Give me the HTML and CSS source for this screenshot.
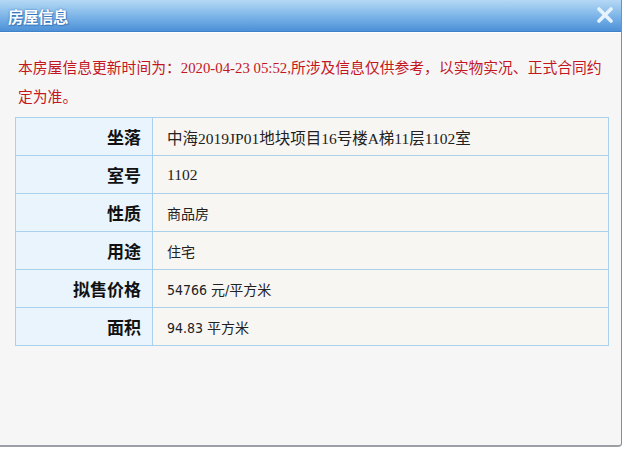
FILE: index.html
```html
<!DOCTYPE html>
<html lang="zh-CN">
<head>
<meta charset="utf-8">
<title>房屋信息</title>
<link rel="stylesheet" href="styles.css">
</head>
<body>
<div class="dialog">
  <div class="titlebar">
    <span class="title">房屋信息</span>
    <span class="close">
      <svg width="18" height="16" viewBox="0 0 18 16"><path d="M3 2 L15 14 M15 2 L3 14" stroke="#e6f2fc" stroke-width="3.6" stroke-linecap="round"/></svg>
    </span>
  </div>
  <div class="content">
    <p class="notice">本房屋信息更新时间为：2020-04-23 05:52,所涉及信息仅供参考，以实物实况、正式合同约定为准。</p>
    <table class="info">
      <tr><th>坐落</th><td class="serif">中海2019JP01地块项目16号楼A梯11层1102室</td></tr>
      <tr><th>室号</th><td class="serif">1102</td></tr>
      <tr><th>性质</th><td>商品房</td></tr>
      <tr><th>用途</th><td>住宅</td></tr>
      <tr><th>拟售价格</th><td>54766 元/平方米</td></tr>
      <tr><th>面积</th><td>94.83 平方米</td></tr>
    </table>
  </div>
</div>
</body>
</html>
```
FILE: styles.css
```css
html, body {
  margin: 0;
  padding: 0;
  background: #ffffff;
}
body {
  width: 625px;
  height: 450px;
  overflow: hidden;
  font-family: "Noto Sans CJK SC", sans-serif;
}
.dialog {
  width: 622px;
  height: 447px;
  border-right: 1px solid #8c8c8c;
  border-bottom: 2px solid #9aa0a6;
  border-bottom-right-radius: 4px;
  background: #f6f6f6;
  display: flex;
  flex-direction: column;
  box-sizing: border-box;
}
.titlebar {
  height: 32px;
  flex: none;
  box-sizing: border-box;
  border-bottom: 1px solid #3f82c9;
  background: linear-gradient(to bottom, #b5d8f5 0%, #8fc1ec 35%, #6aa7e2 70%, #4d90d6 100%);
  display: flex;
  align-items: center;
  justify-content: space-between;
  padding: 0 6px 0 8px;
}
.title {
  color: #ffffff;
  font-size: 15.5px;
  font-weight: bold;
  letter-spacing: -0.5px;
  text-shadow: 0 0 2px #2e6fb5, 1px 1px 1px #3a78bd;
}
.close {
  display: flex;
  width: 20px;
  height: 18px;
  align-items: center;
  justify-content: center;
  margin-top: -2px;
}
.content {
  flex: 1;
  padding: 21px 13px 0 15px;
  border-top: 1px solid #ffffff;
}
.notice {
  margin: 0 0 5px 3px;
  font-family: "Liberation Serif", "Noto Sans CJK SC", serif;
  color: #c3161f;
  font-size: 14.8px;
  line-height: 29px;
  width: 590px;
}
.info {
  border-collapse: collapse;
  width: 594px;
}
.info th, .info td {
  border: 1px solid #a9d1ec;
  height: 38px;
  padding: 0;
  box-sizing: border-box;
}
.info th {
  width: 137px;
  background: #e9f4fc;
  text-align: right;
  padding-right: 11px;
  font-size: 17px;
  font-weight: bold;
  color: #111;
}
.info td {
  background: #f8f6f3;
  text-align: left;
  padding-left: 14px;
  font-family: "DejaVu Sans Condensed", "Noto Sans CJK SC", sans-serif;
  font-size: 14px;
  color: #222;
}
.info td.serif {
  font-family: "Liberation Serif", "Noto Sans CJK SC", serif;
  font-size: 15.5px;
}
```
